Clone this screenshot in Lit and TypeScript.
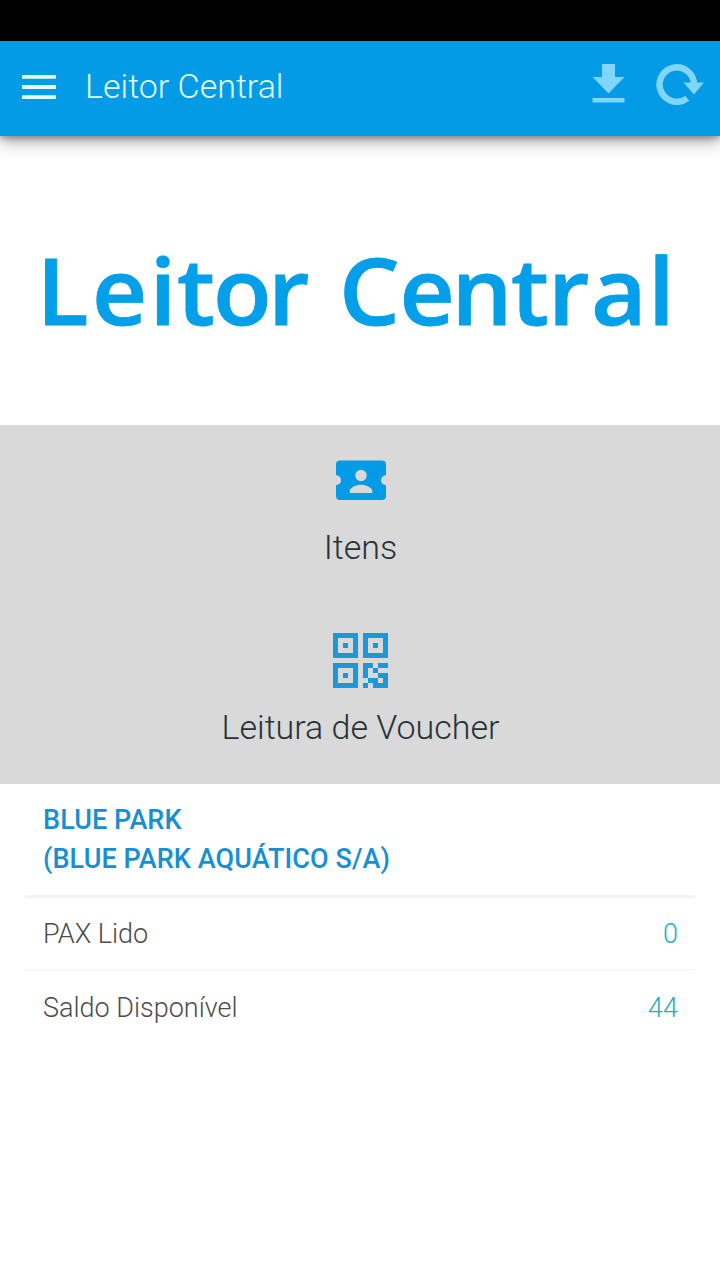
import { LitElement, html, css, svg } from "lit";
import { customElement } from "lit/decorators.js";

const QR_MODULES = [
  [6, 6, 2], [9, 6, 2],
  [6, 7, 1], [8, 7, 1],
  [6, 8, 1], [9, 8, 2],
  [7, 9, 2], [10, 9, 1],
  [6, 10, 1], [8, 10, 3],
];

const FINDERS = [[0, 0], [6, 0], [0, 6]];

@customElement("app-root")
export class AppRoot extends LitElement {
  static styles = css`
    :host { display: block; font-family: Roboto, sans-serif; font-weight: 300; background: #fff; height: 1280px; overflow: hidden; }
    svg { display: block; }
    .status { height: 41px; background: #000; }
    .bar { position: relative; display: flex; align-items: center; height: 95px; box-sizing: border-box; padding: 0 16px 0 22px; background: #039be5; box-shadow: 0 4px 16px rgba(0,0,0,.42), 0 3px 5px rgba(0,0,0,.2); }
    .menu { margin-top: -3px; }
    .title { flex: 1; margin: -6px 0 0 29px; color: #e2fbff; font-size: 34px; line-height: 48px; white-space: nowrap; }
    .actions { display: flex; gap: 31px; margin-top: -10px; }
    .logo { height: 289px; }
    .word { font-family: "Open Sans", sans-serif; font-weight: 600; font-size: 96px; fill: #039fe8; stroke: #039fe8; stroke-width: 0.9; }
    .panel { background: #d9d9d9; height: 359px; display: grid; grid-template-rows: 180px 179px; }
    .cell { display: flex; flex-direction: column; align-items: center; }
    .ticket { margin: 35px 0 0 1px; }
    .qr { margin-top: 28px; }
    .label { color: #263238; font-size: 34px; line-height: 48px; white-space: nowrap; padding-left: 1px; }
    .ticket + .label { margin-top: 22px; }
    .qr + .label { margin-top: 15px; }
    .info { margin: 0 25px; }
    .head { height: 111px; box-sizing: border-box; padding: 17px 18px 0; color: #1690d0; font-weight: 500; font-size: 27px; letter-spacing: 0.08px; line-height: 39px; white-space: nowrap; }
    .row { display: flex; justify-content: space-between; align-items: center; height: 74px; box-sizing: border-box; padding: 1px 17px 0 18px; border-top: 2px solid #f8f8f8; font-size: 27px; color: #4c4c4c; }
    .first { border-top: 3px solid #f3f3f3; padding-top: 0; height: 74px; }
    .num { color: #26b0bd; }
  `;

  render() {
    return html`
      <div class="status"></div>
      <header class="bar">
        <svg class="menu" width="34" height="24" viewBox="0 0 34 24" fill="#e2fbff">
          <path d="M0 0h34v3.8H0zM0 10.1h34v3.8H0zM0 20.2h34V24H0z" />
        </svg>
        <div class="title">Leitor Central</div>
        <div class="actions">
          <svg width="33" height="42" viewBox="0 0 33 42" fill="#81d4fa">
            <path d="M10 1h13v13h9.5L16.5 30.500 .5 14H10zM.5 35h32v4.500H.5z" />
          </svg>
          <svg width="48" height="42" viewBox="0 0 48 42">
            <path d="M31.300 35.200A17.200 17.200 0 1 1 38 21.200" fill="none" stroke="#81d4fa" stroke-width="6.500" />
            <path d="M27.500 19.500H48L38 31.500z" fill="#81d4fa" />
          </svg>
        </div>
      </header>
      <div class="logo">
        <svg width="720" height="289" viewBox="0 136 720 289">
          <g transform="translate(0 325) scale(1 0.96)">
            <text class="word" y="0" x="36.500 92 149.500 177 213 268">Leitor</text>
            <text class="word" y="0" x="339 399.500 451.500 511 548 591 648">Central</text>
          </g>
        </svg>
      </div>
      <section class="panel">
        <div class="cell">
          <svg class="ticket" width="50" height="41" viewBox="0 0 50 41">
            <path fill="#039be5" d="M4 .5h42a4 4 0 0 1 4 4v10.800a5 5 0 0 0 0 10V36a4 4 0 0 1-4 4H4a4 4 0 0 1-4-4V25.300a5 5 0 0 0 0-10V4.500a4 4 0 0 1 4-4z" />
            <circle cx="25" cy="15.500" r="5.700" fill="#d9d9d9" />
            <path d="M13.700 33v-2c0-3.600 7-6.300 11.300-6.300s11.300 2.700 11.300 6.300v2z" fill="#d9d9d9" />
          </svg>
          <div class="label">Itens</div>
        </div>
        <div class="cell">
          <svg class="qr" width="55" height="55" viewBox="0 0 11 11" fill="#1a98d9" shape-rendering="crispEdges">
            ${FINDERS.map(([x, y]) => svg`<path transform="translate(${x} ${y})" fill-rule="evenodd" d="M0 0h5v5H0zM1 1v3h3V1zM2 2h1v1H2z" />`)}
            ${QR_MODULES.map(([x, y, w]) => svg`<rect x=${x} y=${y} width=${w} height="1" />`)}
          </svg>
          <div class="label">Leitura de Voucher</div>
        </div>
      </section>
      <section class="info">
        <div class="head">BLUE PARK<br />(BLUE PARK AQUÁTICO S/A)</div>
        <div class="row first"><span>PAX Lido</span><span class="num">0</span></div>
        <div class="row"><span>Saldo Disponível</span><span class="num">44</span></div>
      </section>
    `;
  }
}
